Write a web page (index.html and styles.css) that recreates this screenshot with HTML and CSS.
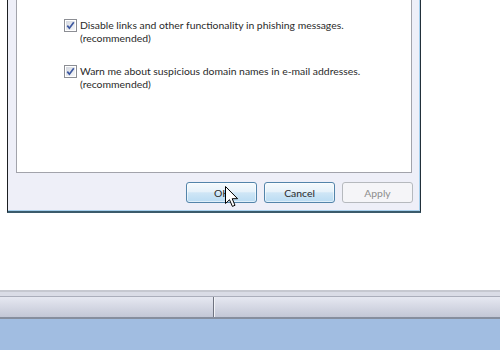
FILE: index.html
```html
<!DOCTYPE html>
<html lang="en">
<head>
  <meta charset="UTF-8" />
  <title>Options - Security</title>
  <link rel="stylesheet" href="styles.css">
</head>
<body>
  <!-- Dialog (top is scrolled off screen) -->
  <div class="dialog">
    <div class="panel">
      <label class="option">
        <span class="check">
          <svg width="13" height="13" viewBox="0 0 13 13">
            <defs>
              <linearGradient id="cbg" x1="0" y1="0" x2="1" y2="1">
                <stop offset="0" stop-color="#d4d8e0"/>
                <stop offset="1" stop-color="#f6f7f9"/>
              </linearGradient>
            </defs>
            <rect x="0.5" y="0.5" width="12" height="12" fill="#fff" stroke="#8c8e94"/>
            <rect x="2" y="2" width="9" height="9" fill="url(#cbg)"/>
            <path d="M3.3 6.6 L5.4 9.2 L9.8 3.2" fill="none" stroke="#3d58a0" stroke-width="1.7"/>
          </svg>
        </span>
        <span class="label">Disable links and other functionality in phishing messages.<br>(recommended)</span>
      </label>
      <label class="option">
        <span class="check">
          <svg width="13" height="13" viewBox="0 0 13 13">
            <rect x="0.5" y="0.5" width="12" height="12" fill="#fff" stroke="#8c8e94"/>
            <rect x="2" y="2" width="9" height="9" fill="url(#cbg)"/>
            <path d="M3.3 6.6 L5.4 9.2 L9.8 3.2" fill="none" stroke="#3d58a0" stroke-width="1.7"/>
          </svg>
        </span>
        <span class="label">Warn me about suspicious domain names in e-mail addresses.<br>(recommended)</span>
      </label>
    </div>
    <div class="buttons">
      <button class="btn hot">OK</button>
      <button class="btn hot">Cancel</button>
      <button class="btn" disabled>Apply</button>
    </div>
  </div>

  <!-- Taskbar strip at the bottom -->
  <div class="taskbar">
    <div class="tb-top"></div>
    <div class="tb-bar">
      <div class="tb-cell first"></div>
      <div class="tb-cell"></div>
    </div>
    <div class="tb-blue"></div>
  </div>

  <!-- Mouse pointer over the OK button -->
  <svg class="cursor" width="14" height="22" viewBox="0 0 14 22">
    <path d="M0.5 0.5 L0.5 17.5 L4.5 13.7 L7.4 20.4 L10 19.3 L7.2 12.7 L12.6 12.7 Z" fill="#fff" stroke="#000" stroke-width="1" stroke-linejoin="miter"/>
  </svg>
</body>
</html>
```
FILE: styles.css
```css
* {
  box-sizing: border-box;
}
body {
  margin: 0;
  width: 500px;
  height: 350px;
  overflow: hidden;
  background: #ffffff;
  font-family: Lato, sans-serif;
  font-size: 10.4px;
  color: #2a2a2a;
}
.dialog {
  margin-left: 7px;
  width: 414px;
  background: #eeeff8;
  border-left: 1px solid #1c1f22;
  border-right: 1px solid #22303a;
  border-bottom: 2px solid #3b5b6c;
  box-shadow: inset -1px -1px 0 #a6d0ee;
  padding: 0 8px 8px 8px;
}
.panel {
  height: 173px;
  background: #ffffff;
  border: 1px solid #a2a3ab;
  border-top: none;
  padding: 19px 0 0 47px;
}
.option {
  display: flex;
  align-items: flex-start;
  margin-bottom: 20px;
  line-height: 13px;
}
.check {
  width: 13px;
  height: 13px;
  margin-right: 3px;
  flex: none;
}
.check svg {
  display: block;
}
.buttons {
  display: flex;
  justify-content: flex-end;
  gap: 7px;
  margin-top: 9px;
  margin-right: -1px;
}
.btn {
  width: 71px;
  height: 21px;
  padding: 0;
  font-family: Lato, sans-serif;
  font-size: 10.4px;
  font-weight: 400;
  color: #8d8d8d;
  background: #f5f5f8;
  border: 1px solid #b6b9be;
  border-radius: 3px;
}
.btn.hot {
  color: #2a2a2a;
  border-color: #5384aa;
  background: linear-gradient(#f5fafd 0%, #e7f2fa 45%, #cfe6f6 52%, #badcf3 100%);
  box-shadow: inset 0 0 0 1px rgba(255,255,255,0.55);
}
.taskbar {
  margin-top: 77px;
}
.tb-top {
  height: 7px;
  background: #dadce6;
  border-top: 2px solid #c6c8d0;
  border-bottom: 1px solid #abaebb;
}
.tb-bar {
  display: flex;
  height: 22px;
  background: linear-gradient(#e6e8f1, #c3c7d6);
  border-bottom: 2px solid #868e9e;
}
.tb-cell {
  flex: 1;
}
.tb-cell.first {
  flex: none;
  width: 214px;
  border-right: 1px solid #6f7380;
  box-shadow: 1px 0 0 #f2f3f7;
}
.tb-blue {
  height: 40px;
  background: #a1bde1;
}
.cursor {
  position: absolute;
  left: 225px;
  top: 186px;
}
```
